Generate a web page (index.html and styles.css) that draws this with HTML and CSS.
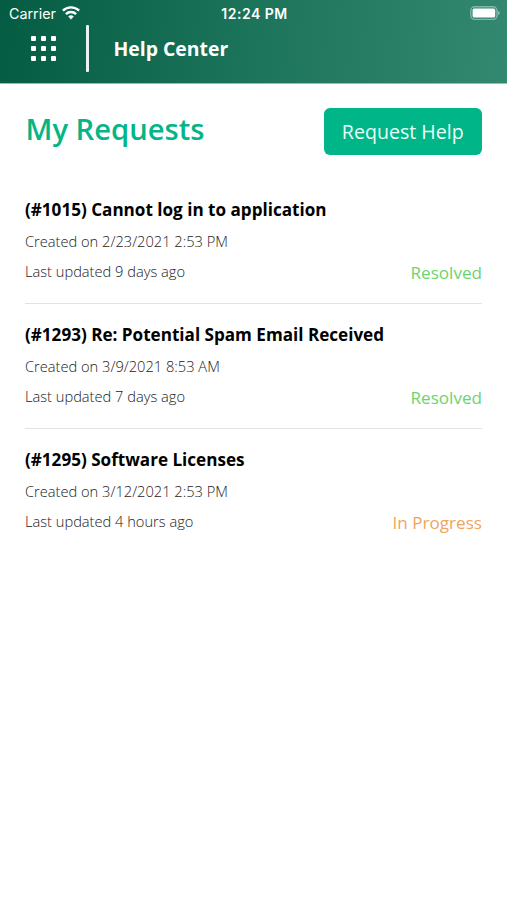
FILE: index.html
```
<!DOCTYPE html>
<html lang="en">
<head>
    <meta charset="UTF-8">
    <meta name="viewport" content="width=device-width, initial-scale=1.0">
    <title>Help Center</title>
    <link rel="stylesheet" href="styles.css">
</head>
<body>
    <header class="header">
        <div class="status-bar">
            <div class="carrier">
                <span>Carrier</span>
                <svg class="wifi" viewBox="0 0 18 14" width="18" height="14">
                    <path d="M9 13.6 L6.2 10.6 A4 4 0 0 1 11.8 10.6 Z" fill="#fff"/>
                    <path d="M3.9 8.1 A7.3 7.3 0 0 1 14.1 8.1" fill="none" stroke="#fff" stroke-width="2.4"/>
                    <path d="M0.9 4.7 A11.5 11.5 0 0 1 17.1 4.7" fill="none" stroke="#fff" stroke-width="2.4"/>
                </svg>
            </div>
            <div class="time">12:24 PM</div>
            <svg class="battery" viewBox="0 0 30 14" width="30" height="14">
                <rect x="0.8" y="0.8" width="26.2" height="12.6" rx="3.8" fill="none" stroke="#fff" stroke-opacity="0.4" stroke-width="1.4"/>
                <rect x="2.6" y="2.6" width="22.6" height="9" rx="1.6" fill="#fff"/>
                <path d="M28 5 Q29.8 5.6 29.8 7 Q29.8 8.4 28 9 Z" fill="#fff" fill-opacity="0.45"/>
            </svg>
        </div>
        <div class="nav">
            <div class="menu">
                <i></i><i></i><i></i>
                <i></i><i></i><i></i>
                <i></i><i></i><i></i>
            </div>
            <div class="divider"></div>
            <div class="nav-title">Help Center</div>
        </div>
    </header>

    <main class="content">
        <div class="top">
            <h1>My Requests</h1>
            <button class="btn">Request Help</button>
        </div>

        <div class="request">
            <h2>(#1015) Cannot log in to application</h2>
            <p>Created on 2/23/2021 2:53 PM</p>
            <div class="row">
                <p>Last updated 9 days ago</p>
                <span class="state resolved">Resolved</span>
            </div>
        </div>
        <div class="request">
            <h2>(#1293) Re: Potential Spam Email Received</h2>
            <p>Created on 3/9/2021 8:53 AM</p>
            <div class="row">
                <p>Last updated 7 days ago</p>
                <span class="state resolved">Resolved</span>
            </div>
        </div>
        <div class="request">
            <h2>(#1295) Software Licenses</h2>
            <p>Created on 3/12/2021 2:53 PM</p>
            <div class="row">
                <p>Last updated 4 hours ago</p>
                <span class="state progress">In Progress</span>
            </div>
        </div>
    </main>
</body>
</html>
```
FILE: styles.css
```
* { box-sizing: border-box; }
body {
    margin: 0;
    min-height: 900px;
    background: #fff;
    font-family: "Open Sans", sans-serif;
    color: #000;
}
h1, h2, p { margin: 0; }
.header {
    height: 84px;
    background: linear-gradient(95deg, #045c43 0%, #1c745a 50%, #338870 100%);
    border-bottom: 1px solid #8fc0b0;
    color: #fff;
}
.status-bar {
    display: grid;
    grid-template-columns: 1fr auto 1fr;
    align-items: center;
    height: 26px;
    padding: 0 7px 0 9px;
    font-family: Inter, sans-serif;
    font-size: 14.3px;
}
.carrier {
    display: flex;
    align-items: center;
    gap: 6px;
}
.time {
    font-weight: 600;
    font-size: 14px;
    letter-spacing: 0.5px;
}
.battery { justify-self: end; }
.nav {
    display: flex;
    align-items: center;
    height: 45px;
    padding-left: 31px;
}
.menu {
    display: grid;
    grid-template-columns: repeat(3, 5px);
    gap: 5px;
}
.menu i {
    width: 5px;
    height: 5px;
    border-radius: 1px;
    background: #fff;
}
.divider {
    width: 3px;
    height: 47px;
    margin: 0 24.5px 0 30px;
    border-radius: 1px;
    background: #e9f4f0;
}
.nav-title {
    font-size: 19.4px;
    font-weight: 700;
}
.content { padding: 24px 25px 24px 25px; }
.top {
    display: flex;
    justify-content: space-between;
    height: 71px;
}
h1 {
    padding-left: 0.5px;
    font-size: 29.2px;
    line-height: 42px;
    font-weight: 600;
    color: #05b587;
}
.btn {
    width: 158.5px;
    height: 47px;
    padding: 0;
    border: none;
    border-radius: 6px;
    background: #00b587;
    color: #e8fff7;
    font-family: inherit;
    font-size: 19.6px;
}
.request {
    height: 125px;
    padding-top: 18px;
    border-bottom: 1px solid #e2e2e2;
}
.request:last-child { border-bottom: none; }
h2 {
    margin-bottom: 3px;
    font-size: 17.1px;
    line-height: 26px;
    font-weight: 700;
}
.request p {
    font-size: 14.65px;
    line-height: 30px;
    font-weight: 300;
    color: #222;
}
.row {
    display: flex;
    justify-content: space-between;
}
.state {
    font-size: 17.1px;
    line-height: 34px;
}
.resolved { color: #6bd46e; }
.progress { color: #efa55f; }
```
